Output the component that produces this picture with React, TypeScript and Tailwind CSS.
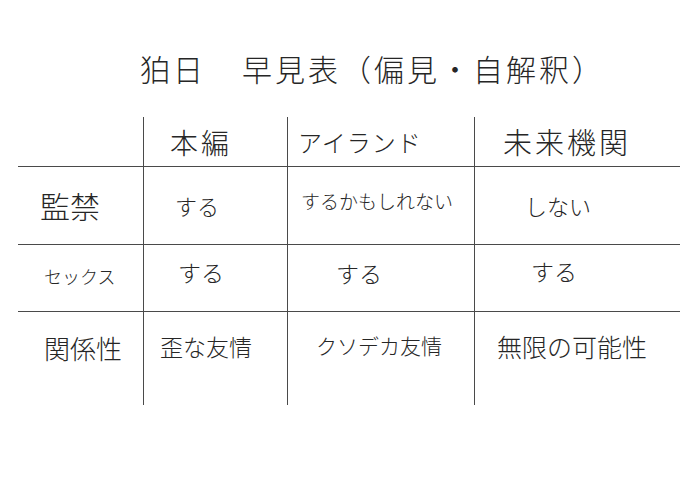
import React from "react";

const line = "border-[#4a4a4a]";

function Cell({ children, cls = "" }: { children?: React.ReactNode; cls?: string }) {
  return <div className={`flex ${cls}`}>{children}</div>;
}

export default function App() {
  const font = { fontFamily: '"Noto Sans CJK JP", "Noto Sans", sans-serif' };
  return (
    <div className="w-[680px] h-[490px] bg-white text-[#262626] overflow-hidden" style={font}>
      <div className="h-[117px] pl-[140px] pt-[48px]">
        <div className="text-[30px] leading-[40px] font-light tracking-[3px] whitespace-nowrap">
          狛日<span className="inline-block w-[36px]" />早見表（偏見・自解釈）
        </div>
      </div>
      <div className="grid grid-cols-[125px_144px_187px_206px] grid-rows-[50px_78px_67px_93px] ml-[18px]">
        {/* header */}
        <Cell cls={`border-b ${line}`} />
        <Cell cls={`border-b border-l ${line} items-center pl-[26px] text-[28px] font-light tracking-[3px]`}>本編</Cell>
        <Cell cls={`border-b border-l ${line} items-center pl-[10px] text-[24px] font-light tracking-[1px]`}>アイランド</Cell>
        <Cell cls={`border-b border-l ${line} items-center pl-[28px] text-[29px] font-light tracking-[3px]`}>未来機関</Cell>
        {/* row 1 */}
        <Cell cls={`border-b ${line} items-center pl-[22px] text-[30px] font-light`}>監禁</Cell>
        <Cell cls={`border-b border-l ${line} items-center pl-[31px] text-[22px] font-light`}>する</Cell>
        <Cell cls={`border-b border-l ${line} items-center pl-[13px] pb-[8px] text-[19px] font-light`}>するかもしれない</Cell>
        <Cell cls={`border-b border-l ${line} items-center pl-[50px] text-[22px] font-light`}>しない</Cell>
        {/* row 2 */}
        <Cell cls={`border-b ${line} items-center pl-[26px] pb-[4px] text-[18px] font-light`}>セックス</Cell>
        <Cell cls={`border-b border-l ${line} items-center pl-[34px] pb-[12px] text-[23px] font-light`}>する</Cell>
        <Cell cls={`border-b border-l ${line} items-center pl-[48px] pb-[10px] text-[23px] font-light`}>する</Cell>
        <Cell cls={`border-b border-l ${line} items-center pl-[56px] pb-[14px] text-[23px] font-light`}>する</Cell>
        {/* row 3 */}
        <Cell cls={`items-start pl-[26px] pt-[16px] text-[26px] font-light`}>関係性</Cell>
        <Cell cls={`border-l ${line} items-start pl-[16px] pt-[17px] text-[23px] font-light`}>歪な友情</Cell>
        <Cell cls={`border-l ${line} items-start pl-[28px] pt-[18px] text-[21px] font-light`}>クソデカ友情</Cell>
        <Cell cls={`border-l ${line} items-start pl-[22px] pt-[16px] text-[25px] font-light`}>無限の可能性</Cell>
      </div>
    </div>
  );
}
